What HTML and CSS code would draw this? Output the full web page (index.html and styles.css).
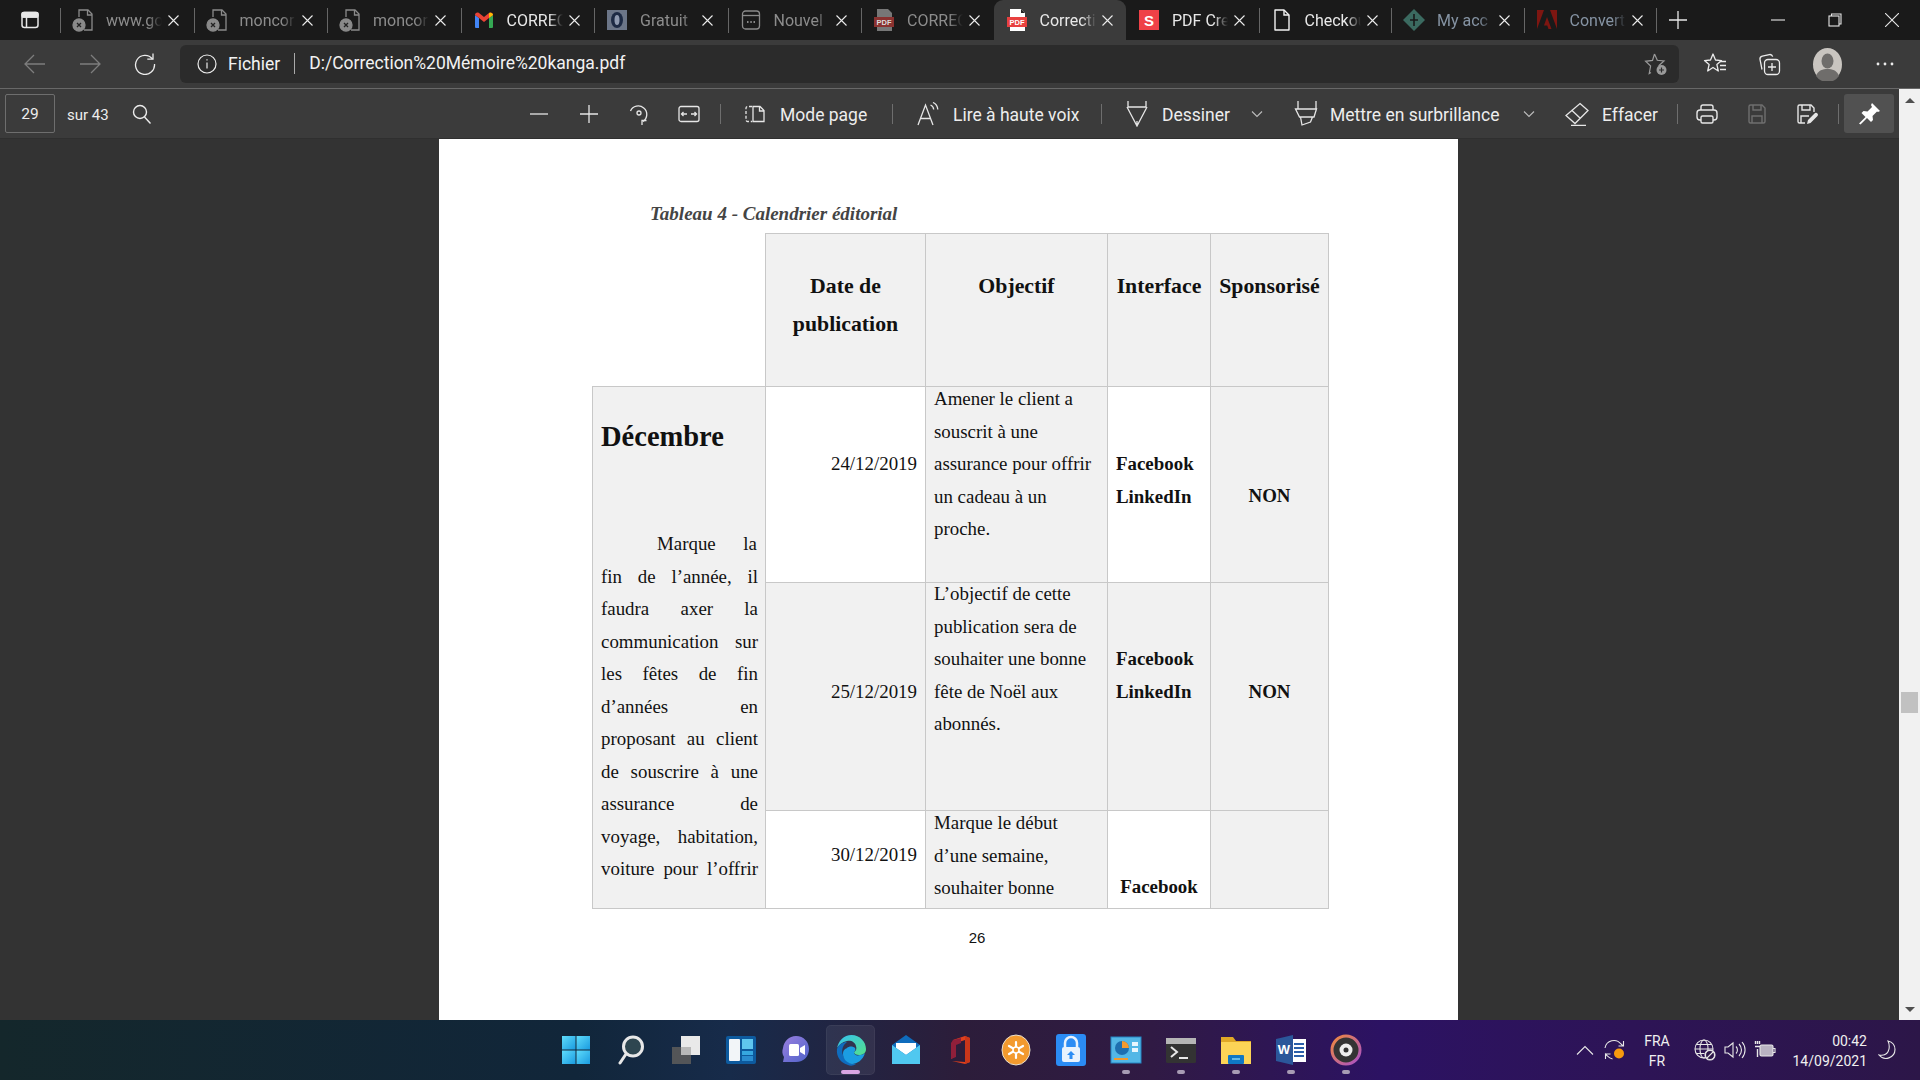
FILE: index.html
```html
<!DOCTYPE html>
<html lang="fr">
<head>
    <meta charset="UTF-8">
    <title>Correction Mémoire kanga.pdf</title>
    <link rel="stylesheet" href="styles.css">
</head>
<body>
<div class="app">

    <!-- onglets -->
    <div class="tabstrip">
        <div class="tab-menu">
            <svg width="20" height="20" viewBox="0 0 20 20" fill="none" stroke="#e8e8e8" stroke-width="1.5"><rect x="2" y="2.5" width="16" height="15" rx="2.5"/><path d="M2 7h16M6.5 7v10.5"/><rect x="2" y="2.5" width="16" height="4.5" rx="1.5" fill="#e8e8e8"/></svg>
        </div>
        <div class="tab dim">
            <svg class="fav" viewBox="0 0 22 24" fill="none" stroke="#8a8a8a" stroke-width="1.3"><path d="M7 9V2h9l4 4v16H12"/><path d="M15.5 2v5H20"/><circle cx="7" cy="17" r="6" fill="#8a8a8a"/><path d="M5 15l4 4M9 15l-4 4" stroke="#222"/></svg>
            <span class="tab-title">www.go</span><svg class="tab-x" viewBox="0 0 11 11"><path d="M.5.5l10 10M10.500.5l-10 10"/></svg>
        </div>
        <div class="tab dim">
            <svg class="fav" viewBox="0 0 22 24" fill="none" stroke="#8a8a8a" stroke-width="1.3"><path d="M7 9V2h9l4 4v16H12"/><path d="M15.5 2v5H20"/><circle cx="7" cy="17" r="6" fill="#8a8a8a"/><path d="M5 15l4 4M9 15l-4 4" stroke="#222"/></svg>
            <span class="tab-title">moncor</span><svg class="tab-x" viewBox="0 0 11 11"><path d="M.5.5l10 10M10.500.5l-10 10"/></svg>
        </div>
        <div class="tab dim">
            <svg class="fav" viewBox="0 0 22 24" fill="none" stroke="#8a8a8a" stroke-width="1.3"><path d="M7 9V2h9l4 4v16H12"/><path d="M15.5 2v5H20"/><circle cx="7" cy="17" r="6" fill="#8a8a8a"/><path d="M5 15l4 4M9 15l-4 4" stroke="#222"/></svg>
            <span class="tab-title">moncor</span><svg class="tab-x" viewBox="0 0 11 11"><path d="M.5.5l10 10M10.500.5l-10 10"/></svg>
        </div>
        <div class="tab">
            <svg class="fav" viewBox="0 0 22 20"><path d="M2 18V5l4 3v10H3a1 1 0 0 1-1-1z" fill="#4285f4"/><path d="M16 18V8l4-3v12a1 1 0 0 1-1 1z" fill="#34a853"/><path d="M2 5c0-2 2-3 4-2l5 4 5-4c2-1 4 0 4 2l-4 3-5 4-5-4z" fill="#ea4335"/><path d="M16 3.200c2-1.200 4 0 4 1.800l-4 3z" fill="#fbbc04"/></svg>
            <span class="tab-title">CORREC</span><svg class="tab-x" viewBox="0 0 11 11"><path d="M.5.5l10 10M10.500.5l-10 10"/></svg>
        </div>
        <div class="tab dim">
            <svg class="fav" viewBox="0 0 22 22"><rect x="1" y="1" width="20" height="20" fill="#6c7688"/><ellipse cx="11" cy="11" rx="6" ry="8" fill="#1d2a44"/><ellipse cx="11" cy="11" rx="2.500" ry="5" fill="#8f9ab0"/></svg>
            <span class="tab-title">Gratuit</span><svg class="tab-x" viewBox="0 0 11 11"><path d="M.5.5l10 10M10.500.5l-10 10"/></svg>
        </div>
        <div class="tab dim">
            <svg class="fav" viewBox="0 0 22 22" fill="none" stroke="#8a8a8a" stroke-width="1.3"><rect x="2.500" y="2" width="17" height="18" rx="3"/><path d="M2.500 6.500h17"/><path d="M7 13h1.500M10.300 13h1.500M13.500 13h1.500" stroke-width="1.800"/></svg>
            <span class="tab-title">Nouvel</span><svg class="tab-x" viewBox="0 0 11 11"><path d="M.5.5l10 10M10.500.5l-10 10"/></svg>
        </div>
        <div class="tab dim">
            <svg class="fav" viewBox="0 0 22 24"><path d="M4 1h11l4 4v18H4z" fill="#777"/><rect x="1" y="9" width="20" height="10" fill="#8a3230"/><text x="11" y="17" class="fav-pdf" fill="#ddd">PDF</text></svg>
            <span class="tab-title">CORREC</span><svg class="tab-x" viewBox="0 0 11 11"><path d="M.5.5l10 10M10.500.5l-10 10"/></svg>
        </div>
        <div class="tab active">
            <svg class="fav" viewBox="0 0 22 24"><path d="M4 1h11l4 4v18H4z" fill="#fff"/><path d="M15 1v4h4z" fill="#222"/><rect x="1" y="9" width="20" height="10" fill="#e8403f"/><text x="11" y="17" class="fav-pdf" fill="#fff">PDF</text></svg>
            <span class="tab-title">Correcti</span><svg class="tab-x" viewBox="0 0 11 11"><path d="M.5.5l10 10M10.500.5l-10 10"/></svg>
        </div>
        <div class="tab">
            <svg class="fav" viewBox="0 0 22 22"><rect x="1" y="1" width="20" height="20" fill="#ef4147"/><text x="11" y="16.500" class="fav-s" fill="#fff">S</text></svg>
            <span class="tab-title">PDF Cre</span><svg class="tab-x" viewBox="0 0 11 11"><path d="M.5.5l10 10M10.500.5l-10 10"/></svg>
        </div>
        <div class="tab">
            <svg class="fav" viewBox="0 0 22 24" fill="none" stroke="#f2f2f2" stroke-width="1.400"><path d="M4 2h9l5 5v15H4z" stroke-linejoin="round"/><path d="M13 2v5h5"/></svg>
            <span class="tab-title">Checkou</span><svg class="tab-x" viewBox="0 0 11 11"><path d="M.5.5l10 10M10.500.5l-10 10"/></svg>
        </div>
        <div class="tab dim">
            <svg class="fav" viewBox="0 0 22 22"><path d="M11 0l11 11-11 11L0 11z" fill="#3b6a60"/><path d="M11 5v12M7 11h8" stroke="#1a1a1a" stroke-width="1.600"/></svg>
            <span class="tab-title blueish">My acc</span><svg class="tab-x" viewBox="0 0 11 11"><path d="M.5.5l10 10M10.500.5l-10 10"/></svg>
        </div>
        <div class="tab dim">
            <svg class="fav" viewBox="0 0 22 22"><path d="M1 1h7L1 20zM14 1h7v19zM11 8l4.500 12h-3l-1.300-3.500H8z" fill="#7e1611"/></svg>
            <span class="tab-title blueish">Convert</span><svg class="tab-x" viewBox="0 0 11 11"><path d="M.5.5l10 10M10.500.5l-10 10"/></svg>
        </div>
        <div class="tab-new">
            <svg width="18" height="18" viewBox="0 0 18 18" stroke="#e8e8e8" stroke-width="1.300"><path d="M9 0v18M0 9h18"/></svg>
        </div>
        <div class="win-controls">
            <svg width="14" height="14" viewBox="0 0 14 14" stroke="#e8e8e8" stroke-width="1.100"><path d="M0 7h14"/></svg>
            <svg width="14" height="14" viewBox="0 0 14 14" fill="none" stroke="#e8e8e8" stroke-width="1.100"><rect x="1" y="3" width="10" height="10"/><path d="M3.500 3V1H13v10h-2"/></svg>
            <svg width="14" height="14" viewBox="0 0 14 14" stroke="#e8e8e8" stroke-width="1.100"><path d="M0 0l14 14M14 0L0 14"/></svg>
        </div>
    </div>

    <!-- barre d'adresse -->
    <div class="addrbar">
        <div class="nav-btn">
            <svg width="22" height="22" viewBox="0 0 22 22" fill="none" stroke="#7d7d7d" stroke-width="1.300"><path d="M21 11H1M10 2l-9 9 9 9"/></svg>
        </div>
        <div class="nav-btn">
            <svg width="22" height="22" viewBox="0 0 22 22" fill="none" stroke="#7d7d7d" stroke-width="1.300"><path d="M1 11h20M12 2l9 9-9 9"/></svg>
        </div>
        <div class="nav-btn">
            <svg width="22" height="22" viewBox="0 0 22 22" fill="none" stroke="#ececec" stroke-width="1.300"><path d="M18.500 6A9.500 9.500 0 1 0 20.500 11"/><path d="M19 0.500V6.200h-5.700"/></svg>
        </div>
        <div class="addr-box">
            <svg width="20" height="20" viewBox="0 0 20 20" fill="none" stroke="#ececec" stroke-width="1.200"><circle cx="10" cy="10" r="9"/><path d="M10 8.500v6M10 5.200v1.300"/></svg>
            <span class="addr-scheme">Fichier</span>
            <span class="addr-sep"></span>
            <span class="addr-url">D:/Correction%20Mémoire%20kanga.pdf</span>
            <svg class="addr-star" width="24" height="24" viewBox="0 0 24 24" fill="none" stroke="#9a9a9a" stroke-width="1.200"><path d="M10.500 2l2.800 6.300 6.700.7-5 4.500 1.200 3.500M7 20.500l-1.800 1 1.400-7.500-5-4.700 6.900-.9L10.500 2"/><circle cx="17.500" cy="18" r="5" fill="#9a9a9a" stroke="none"/><path d="M17.500 15.500v5M15 18h5" stroke="#2b2b2b"/></svg>
        </div>
        <div class="addr-right">
            <div class="nav-btn">
                <svg width="24" height="24" viewBox="0 0 24 24" fill="none" stroke="#ececec" stroke-width="1.300"><path d="M10 2l2.500 6 6 .6-4.600 4 1.400 6.400L10 15.500 4.700 19l1.400-6.400-4.600-4 6-.6z" stroke-linejoin="round"/><path d="M17 9.500h6M17 13.500h6M17 17.500h6"/></svg>
            </div>
            <div class="nav-btn narrow">
                <svg width="24" height="24" viewBox="0 0 24 24" fill="none" stroke="#ececec" stroke-width="1.300"><path d="M5 17.500L3 7.500a3 3 0 0 1 2.300-3.400l7-1.500a3 3 0 0 1 3.400 2"/><rect x="7.500" y="7.500" width="15" height="15" rx="3.500"/><path d="M15 11v8M11 15h8"/></svg>
            </div>
            <div class="nav-btn wide avatar">
                <svg width="29" height="33" viewBox="0 0 29 33"><ellipse cx="14.500" cy="16.500" rx="14.500" ry="16.500" fill="#c9c5c0"/><ellipse cx="14.500" cy="13" rx="6" ry="7.500" fill="#6f6d6b"/><path d="M3 28c2-6 7-7 11.500-7S24 22 26 28a14 14 0 0 1-23 0z" fill="#6f6d6b"/></svg>
            </div>
            <div class="nav-btn wide">
                <svg width="18" height="4" viewBox="0 0 18 4" fill="#ececec"><circle cx="2" cy="2" r="1.400"/><circle cx="9" cy="2" r="1.400"/><circle cx="16" cy="2" r="1.400"/></svg>
            </div>
        </div>
    </div>

    <div class="work">
        <div class="work-main">

            <!-- barre d'outils pdf -->
            <div class="pdfbar">
                <div class="page-input">29</div>
                <span class="page-total">sur 43</span>
                <svg class="ic-search" width="22" height="22" viewBox="0 0 22 22" fill="none" stroke="#ececec" stroke-width="1.400"><circle cx="9" cy="9" r="6.500"/><path d="M13.500 14l6 6.500"/></svg>

                <div class="pdf-btn first-zoom"><svg width="18" height="18" viewBox="0 0 18 18" stroke="#e6e6e6" stroke-width="1.300"><path d="M0 9h18"/></svg></div>
                <div class="pdf-btn"><svg width="18" height="18" viewBox="0 0 18 18" stroke="#e6e6e6" stroke-width="1.300"><path d="M0 9h18M9 0v18"/></svg></div>
                <div class="pdf-btn"><svg width="22" height="24" viewBox="0 0 22 24" fill="none" stroke="#e6e6e6" stroke-width="1.300"><path d="M2.500 9A8.500 8.500 0 1 1 15 19.500"/><path d="M14 23v-4.500h4.500"/><circle cx="11" cy="11" r="2"/></svg></div>
                <div class="pdf-btn"><svg width="22" height="18" viewBox="0 0 22 18" fill="none" stroke="#e6e6e6" stroke-width="1.300"><rect x="1" y="1.500" width="20" height="15" rx="2"/><path d="M3.500 9H9M5.500 7l-2 2 2 2M18.500 9H13M16.500 7l2 2-2 2"/></svg></div>
                <span class="pdf-sep sep-a"></span>

                <div class="tool t-mode">
                    <svg width="24" height="24" viewBox="0 0 24 24" fill="none" stroke="#e6e6e6" stroke-width="1.300"><path d="M9 4.500H4.500a1.500 1.500 0 0 0-1.500 1.500v12a1.500 1.500 0 0 0 1.500 1.500H9" stroke-dasharray="3 1.800"/><path d="M10 4.500h7l4 4v11H10zM16.500 4.500V9H21"/></svg>
                    <span>Mode page</span>
                </div>
                <span class="pdf-sep sep-b"></span>

                <div class="tool t-read">
                    <svg width="24" height="24" viewBox="0 0 24 24" fill="none" stroke="#e6e6e6" stroke-width="1.300"><path d="M2 23L9.500 3 17 23M4.500 16.500h10"/><path d="M14.500 3c2 .8 3 2.300 3.200 4.500M17 .5c3 1.200 4.500 3.700 4.800 7"/></svg>
                    <span>Lire à haute voix</span>
                </div>
                <span class="pdf-sep sep-c"></span>

                <div class="tool t-draw">
                    <svg width="24" height="26" viewBox="0 0 24 26" fill="none" stroke="#e6e6e6" stroke-width="1.300"><path d="M3 0v6h18V0M2 6l10 19L22 6M12 25v-5"/></svg>
                    <span>Dessiner</span>
                </div>
                <svg class="chev chev-draw" width="12" height="8" viewBox="0 0 12 8" fill="none" stroke="#bdbdbd" stroke-width="1.100"><path d="M1 1.500l5 5 5-5"/></svg>

                <div class="tool t-hl">
                    <svg width="24" height="26" viewBox="0 0 24 26" fill="none" stroke="#e6e6e6" stroke-width="1.300"><path d="M4 0v8h18V0M1.500 8h21L20 16H5.500zM6.500 16l1.500 8 8.500-3 2-5"/></svg>
                    <span>Mettre en surbrillance</span>
                </div>
                <svg class="chev chev-hl" width="12" height="8" viewBox="0 0 12 8" fill="none" stroke="#bdbdbd" stroke-width="1.100"><path d="M1 1.500l5 5 5-5"/></svg>

                <div class="tool t-erase">
                    <svg width="24" height="24" viewBox="0 0 24 24" fill="none" stroke="#e6e6e6" stroke-width="1.300"><path d="M15 1.500l8 7-13 13-9-8zM6.500 8l9 8.500M6 23.500h15"/></svg>
                    <span>Effacer</span>
                </div>
                <span class="pdf-sep sep-d"></span>

                <div class="pdf-btn first-print"><svg width="22" height="22" viewBox="0 0 22 22" fill="none" stroke="#e6e6e6" stroke-width="1.400"><path d="M5 7V4a2 2 0 0 1 2-2h8a2 2 0 0 1 2 2v3"/><rect x="1" y="7" width="20" height="10" rx="3"/><rect x="5" y="13" width="12" height="7" rx="1.500" fill="#3b3b3b"/></svg></div>
                <div class="pdf-btn"><svg width="20" height="22" viewBox="0 0 20 22" fill="none" stroke="#6f6f6f" stroke-width="1.400"><path d="M2 3.500A1.500 1.500 0 0 1 3.500 2H15l3 3v13.500a1.500 1.500 0 0 1-1.500 1.500h-13A1.500 1.500 0 0 1 2 18.500z"/><path d="M6 2v5h8V2M5 20v-7h10v7"/></svg></div>
                <div class="pdf-btn"><svg width="22" height="22" viewBox="0 0 22 22" fill="none" stroke="#e6e6e6" stroke-width="1.400"><path d="M9 20H3.500A1.500 1.500 0 0 1 2 18.500v-15A1.500 1.500 0 0 1 3.500 2H15l3 3v4"/><path d="M6 2v5h8V2M5 20v-7h8"/><path d="M11 21l1-4 7-7a2 2 0 0 1 2.500 3l-7 7z" fill="#e6e6e6" stroke="none"/></svg></div>
                <span class="pdf-sep sep-e"></span>
                <div class="pin-btn"><svg width="22" height="22" viewBox="0 0 22 22" fill="#fff"><path d="M14 0l8 8-2 1-1-.500-4.500 4.500.5 4-2 2-4-4-6.500 6.500L1 20.500 7.500 14l-4-4 2-2 4 .5L14 4l-1-2z"/></svg></div>
            </div>

            <!-- page -->
            <div class="viewer">
                <div class="page">
                    <p class="caption">Tableau 4 - Calendrier éditorial</p>
                    <table class="cal">
                        <colgroup>
                            <col class="c-month"><col class="c-date"><col class="c-obj"><col class="c-iface"><col class="c-spons">
                        </colgroup>
                        <tr class="r-head">
                            <td class="blank"></td>
                            <th>Date de<br>publication</th>
                            <th>Objectif</th>
                            <th>Interface</th>
                            <th>Sponsorisé</th>
                        </tr>
                        <tr class="r-1">
                            <td class="month" rowspan="3">
                                <div class="month-name">Décembre</div>
                                <div class="month-text">
                                    <span class="indent">Marque la</span><br>
                                    fin de l’année, il<br>
                                    faudra axer la<br>
                                    communication sur<br>
                                    les fêtes de fin<br>
                                    d’années en<br>
                                    proposant au client<br>
                                    de souscrire à une<br>
                                    assurance de<br>
                                    voyage, habitation,<br>
                                    voiture pour l’offrir
                                </div>
                            </td>
                            <td class="date white"><div class="line3">24/12/2019</div></td>
                            <td class="grey"><div class="line1">Amener le client a<br>souscrit à une<br>assurance pour offrir<br>un cadeau à un<br>proche.</div></td>
                            <td class="net white"><div class="line3">Facebook<br>LinkedIn</div></td>
                            <td class="spons grey"><div class="line4">NON</div></td>
                        </tr>
                        <tr class="r-2">
                            <td class="date grey"><div class="line4">25/12/2019</div></td>
                            <td class="grey"><div class="line1">L’objectif de cette<br>publication sera de<br>souhaiter une bonne<br>fête de Noël aux<br>abonnés.</div></td>
                            <td class="net grey"><div class="line3">Facebook<br>LinkedIn</div></td>
                            <td class="spons grey"><div class="line4">NON</div></td>
                        </tr>
                        <tr class="r-3">
                            <td class="date white"><div class="line2">30/12/2019</div></td>
                            <td class="grey"><div class="line1">Marque le début<br>d’une semaine,<br>souhaiter bonne</div></td>
                            <td class="net net-mid white"><div class="line3">Facebook</div></td>
                            <td class="grey"></td>
                        </tr>
                    </table>
                    <div class="page-num">26</div>
                </div>
            </div>
        </div>

        <div class="scrollbar">
            <span class="arrow-up"></span>
            <span class="thumb"></span>
            <span class="arrow-down"></span>
        </div>
    </div>

    <!-- barre des taches -->
    <div class="taskbar">
        <div></div>
        <div class="task-icons">
            <div class="task-item">
                <svg viewBox="0 0 32 32"><defs><linearGradient id="w1" x1="0" y1="0" x2="1" y2="1"><stop offset="0" stop-color="#5fdcfb"/><stop offset="1" stop-color="#1a9be0"/></linearGradient></defs><rect x="2" y="2" width="13.500" height="13.500" fill="url(#w1)"/><rect x="16.500" y="2" width="13.500" height="13.500" fill="url(#w1)"/><rect x="2" y="16.500" width="13.500" height="13.500" fill="url(#w1)"/><rect x="16.500" y="16.500" width="13.500" height="13.500" fill="url(#w1)"/></svg>
                <i class="dot none"></i>
            </div>
            <div class="task-item">
                <svg viewBox="0 0 32 32" fill="none"><circle cx="18" cy="12.500" r="9.500" stroke="#e8e8e8" stroke-width="3" fill="#2e4650"/><path d="M11 20l-6 9" stroke="#e8e8e8" stroke-width="3" stroke-linecap="round"/></svg>
                <i class="dot none"></i>
            </div>
            <div class="task-item">
                <svg viewBox="0 0 32 32"><rect x="11" y="2" width="19" height="19" fill="#e9e9e9"/><rect x="2" y="13" width="19" height="17" fill="#5a5a5a" opacity=".9"/><rect x="11" y="13" width="10" height="8" fill="#b8b8b8"/></svg>
                <i class="dot none"></i>
            </div>
            <div class="task-item">
                <svg viewBox="0 0 32 32"><rect x="1" y="2" width="30" height="28" rx="2" fill="#0d5a9e"/><rect x="4" y="5" width="11" height="22" rx="1" fill="#f2f5f8"/><rect x="17" y="5" width="11" height="10" fill="#5fc6ee"/><rect x="17" y="17" width="11" height="4" fill="#36a7e0"/><rect x="17" y="22" width="11" height="5" fill="#2a8cd0"/></svg>
                <i class="dot none"></i>
            </div>
            <div class="task-item">
                <svg viewBox="0 0 32 32"><defs><linearGradient id="c1" x1="0" y1="0" x2="1" y2="1"><stop offset="0" stop-color="#9a7fe0"/><stop offset="1" stop-color="#4f63c9"/></linearGradient></defs><path d="M16 2c8 0 13 6 13 13s-5 13-13 13H3l1-5C2 20 2 17 3 14 4 7 9 2 16 2z" fill="url(#c1)"/><rect x="9" y="10" width="10" height="12" rx="1.500" fill="#fff"/><path d="M20 14l5-3v10l-5-3z" fill="#fff"/></svg>
                <i class="dot none"></i>
            </div>
            <div class="task-item active">
                <svg viewBox="0 0 32 32"><defs><linearGradient id="e1" x1="0" y1="0" x2="1" y2="1"><stop offset="0" stop-color="#35c1f1"/><stop offset="1" stop-color="#54e08a"/></linearGradient></defs><path d="M2 15C3 7 9 1 16.500 1 25 1 31 8 31 15c0 4-3 6-7 6-3 0-5-1-5-3 2-1 3-3 2-6-1-4-5-6-9-5-5 1-8 4-10 7z" fill="url(#e1)"/><path d="M2 15c2-5 6-7 10-7-4 3-6 8-4 13 1 5 6 9 11 9l2 .3C18 32 15 32 13 31 6 29 1 23 2 15z" fill="#0f6cbd"/><path d="M12 14c2-2 6-2 8 0 1 2 0 3-1 4 0 3 3 4 6 3 2 0 4-1 5-2-2 7-8 11-13 11-6-1-9-6-9-10s2-5 4-6z" fill="#1b9de2"/></svg>
                <i class="dot pill"></i>
            </div>
            <div class="task-item">
                <svg viewBox="0 0 32 32"><path d="M16 1l14 10v19H2V11z" fill="#0f6cbd"/><path d="M6 9h20v5l-10 7-10-7z" fill="#fff"/><path d="M2 11l14 10 14-10v19H2z" fill="#50c8f0"/></svg>
                <i class="dot none"></i>
            </div>
            <div class="task-item">
                <svg viewBox="0 0 32 32"><path d="M8 6l12-4 5 2v24l-5 2-13-3 13 1V6l-9 3v13l-5 3z" fill="#e1401c"/><path d="M8 6l8-2v5l-5 2v12l-5 2V9z" fill="#8f1f3a"/><path d="M20 2l5 2v24l-5 2z" fill="#c8361a"/></svg>
                <i class="dot none"></i>
            </div>
            <div class="task-item">
                <svg viewBox="0 0 32 32"><ellipse cx="16" cy="16" rx="14" ry="15" fill="#f39a2e" stroke="#e8e0d0"/><g stroke="#fff" stroke-width="2.200" stroke-linecap="round"><path d="M16 8v16M9 12l14 8M23 12L9 20"/></g><circle cx="16" cy="16" r="3" fill="#f39a2e" stroke="#fff" stroke-width="1.500"/></svg>
                <i class="dot none"></i>
            </div>
            <div class="task-item">
                <svg viewBox="0 0 32 32"><rect x="1" y="0" width="30" height="32" rx="3" fill="#2b8cf4"/><rect x="7" y="13" width="18" height="15" rx="2" fill="#e8f2fd"/><path d="M10 13V9a6 6 0 0 1 12 0v4" fill="none" stroke="#e8f2fd" stroke-width="2.500"/><path d="M16 17l-4 4h2.500v4h3v-4H20z" fill="#2b8cf4"/></svg>
                <i class="dot none"></i>
            </div>
            <div class="task-item">
                <svg viewBox="0 0 32 32"><rect x="1" y="3" width="30" height="26" fill="#53b7e6" stroke="#2486c4"/><circle cx="12" cy="14" r="7" fill="#1e6fb0"/><path d="M12 14V7a7 7 0 0 1 7 7z" fill="#f39a2e"/><rect x="22" y="8" width="6" height="4" fill="#e8f6fd"/><rect x="22" y="14" width="6" height="4" fill="#e8f6fd"/><rect x="4" y="24" width="14" height="2" fill="#f39a2e"/></svg>
                <i class="dot"></i>
            </div>
            <div class="task-item">
                <svg viewBox="0 0 32 32"><rect x="1" y="4" width="30" height="25" rx="1.500" fill="#333"/><rect x="1" y="4" width="30" height="6" fill="#b5b5b5"/><path d="M6 13l6 5-6 5" fill="none" stroke="#e8e8e8" stroke-width="2"/><path d="M14 24h9" stroke="#e8e8e8" stroke-width="2"/></svg>
                <i class="dot"></i>
            </div>
            <div class="task-item">
                <svg viewBox="0 0 32 32"><path d="M1 3h12l3 4h15v23H1z" fill="#e0a826"/><rect x="1" y="8" width="30" height="22" fill="#fcd456"/><rect x="8" y="21" width="16" height="9" rx="1" fill="#0f78c4"/><path d="M12 25h8" stroke="#7fd0f5" stroke-width="1.500"/></svg>
                <i class="dot"></i>
            </div>
            <div class="task-item">
                <svg viewBox="0 0 32 32"><rect x="12" y="5" width="19" height="23" fill="#fff"/><path d="M19 10h10M19 14h10M19 18h10M19 22h10" stroke="#2b5faa" stroke-width="2"/><path d="M1 5l17-4v30L1 27z" fill="#2b579a"/><text x="9" y="20" class="word-w" fill="#fff">W</text></svg>
                <i class="dot"></i>
            </div>
            <div class="task-item">
                <svg viewBox="0 0 32 32"><defs><linearGradient id="g1" x1="0" y1="0" x2="1" y2="1"><stop offset="0" stop-color="#f08a3c"/><stop offset="1" stop-color="#a850c8"/></linearGradient></defs><circle cx="16" cy="16" r="14" fill="#343434" stroke="url(#g1)" stroke-width="3"/><circle cx="16" cy="16" r="6.500" fill="#eee"/><circle cx="16" cy="16" r="2.500" fill="#333"/></svg>
                <i class="dot"></i>
            </div>
        </div>
        <div class="tray">
            <div class="tray-ic">
                <svg width="18" height="10" viewBox="0 0 18 10" fill="none" stroke="#e8e8e8" stroke-width="1.100"><path d="M1 9.500l8-8 8 8"/></svg>
            </div>
            <div class="tray-ic">
                <svg width="22" height="22" viewBox="0 0 22 22" fill="none" stroke="#e8e8e8" stroke-width="1.100"><path d="M1 9a9 9 0 0 1 16-4l2 2M19.500 2v5h-5"/><path d="M1.500 15h5M1.500 20v-5l2 2a9 9 0 0 0 5 3"/><circle cx="15" cy="14.500" r="5" fill="#f79a0e" stroke="none"/></svg>
            </div>
            <div class="tray-lang">FRA<br>FR</div>
            <div class="tray-ic globe">
                <svg width="22" height="22" viewBox="0 0 22 22" fill="none" stroke="#e8e8e8" stroke-width="1.100"><circle cx="10" cy="10" r="9"/><ellipse cx="10" cy="10" rx="4" ry="9"/><path d="M1 10h18M2.500 5.500h15M2.500 14.500h8"/><circle cx="16" cy="16" r="5" fill="#2c1648"/><path d="M13 19l6-6"/><circle cx="16" cy="16" r="4.500"/></svg>
            </div>
            <div class="tray-ic">
                <svg width="22" height="20" viewBox="0 0 22 20" fill="none" stroke="#e8e8e8" stroke-width="1.100"><path d="M1 7v6h3l5 4V3L4 7z"/><path d="M12 6.500a5 5 0 0 1 0 7M15 4a8.500 8.500 0 0 1 0 12M18 2a12 12 0 0 1 0 16"/></svg>
            </div>
            <div class="tray-ic">
                <svg width="22" height="18" viewBox="0 0 22 18" fill="none" stroke="#e8e8e8" stroke-width="1.100"><rect x="6" y="4" width="13" height="11" rx="1.500" fill="#e8e8e8" fill-opacity=".75"/><path d="M19 7.500h2v4h-2"/><path d="M1 5.500h5M3.500 0v3M1.500 0v3M5.500 0v3M3.500 8v8" stroke-width="1.400"/></svg>
            </div>
            <div class="tray-clock">00:42<br>14/09/2021</div>
            <div class="tray-ic moon">
                <svg width="18" height="20" viewBox="0 0 18 20" fill="none" stroke="#e8e8e8" stroke-width="1.100"><path d="M10 1c4 1 7 4 7 8.500A9 9 0 0 1 1 15c5 1 9-1 10-6 .5-3 0-6-1-8z"/></svg>
            </div>
        </div>
    </div>

</div>
</body>
</html>
```

FILE: styles.css
```css
html, body {
    margin: 0;
    padding: 0;
}

body {
    font-family: Roboto, "Noto Sans", sans-serif;
    background: #333;
}

.app {
    width: 1920px;
    height: 1080px;
    display: flex;
    flex-direction: column;
    overflow: hidden;
}

/* onglets */
.tabstrip {
    height: 40px;
    background: #1a1a1a;
    display: flex;
    align-items: center;
    flex-shrink: 0;
}

.tab-menu {
    width: 60px;
    display: flex;
    justify-content: center;
}

.tab {
    width: 132.500px;
    height: 40px;
    box-sizing: border-box;
    display: flex;
    align-items: center;
    position: relative;
    padding-left: 12px;
    color: #e8e8e8;
}

.tab:nth-child(-n+7) {
    width: 133.500px;
}

.tab::before {
    content: "";
    position: absolute;
    left: 0;
    top: 8px;
    height: 25px;
    width: 1px;
    background: #666;
}

.tab.active {
    background: #3b3b3b;
    border-radius: 9px 9px 0 0;
}

.tab.active::before,
.tab.active + .tab::before {
    display: none;
}

.fav {
    width: 22px;
    height: 24px;
    flex-shrink: 0;
}

.fav-pdf {
    font-family: "Liberation Sans", sans-serif;
    font-size: 7.500px;
    font-weight: bold;
    text-anchor: middle;
}

.fav-s {
    font-family: "Liberation Sans", sans-serif;
    font-size: 15px;
    font-weight: bold;
    text-anchor: middle;
}

.tab-title {
    margin-left: 12px;
    width: 56px;
    white-space: nowrap;
    overflow: hidden;
    font-size: 16px;
    -webkit-mask-image: linear-gradient(to right, #000 75%, transparent 100%);
    mask-image: linear-gradient(to right, #000 75%, transparent 100%);
}

.tab-x {
    margin-left: 6px;
    width: 11px;
    height: 11px;
    stroke: #ececec;
    stroke-width: 1.100;
    fill: none;
    flex-shrink: 0;
}

.tab.dim .tab-title {
    color: #8c8c8c;
}

.tab.dim .tab-title.blueish {
    color: #8593a3;
}

.tab-new {
    width: 42px;
    display: flex;
    justify-content: center;
    height: 25px;
    align-items: center;
    border-left: 1px solid #666;
}

.win-controls {
    margin-left: 72px;
    display: flex;
    gap: 43px;
}

/* barre d'adresse */
.addrbar {
    height: 49px;
    box-sizing: border-box;
    background: #3b3b3b;
    border-bottom: 1px solid #686868;
    display: flex;
    align-items: flex-start;
    flex-shrink: 0;
    padding-left: 7px;
    padding-top: 5px;
}

.nav-btn {
    width: 55px;
    height: 38px;
    display: flex;
    align-items: center;
    justify-content: center;
}

.nav-btn.narrow {
    width: 54px;
}

.nav-btn.wide {
    width: 57px;
}

.nav-btn.avatar {
    margin-left: 3px;
}

.addr-box {
    margin-left: 8px;
    width: 1499px;
    height: 38px;
    box-sizing: border-box;
    background: #2b2b2b;
    border-radius: 6px;
    display: flex;
    align-items: center;
    padding-left: 17px;
    padding-right: 11px;
    padding-bottom: 1px;
    color: #f2f2f2;
    font-size: 17.500px;
}

.addr-scheme {
    margin-left: 11px;
}

.addr-sep {
    width: 1px;
    height: 21px;
    background: #aaa;
    margin-left: 14px;
}

.addr-url {
    margin-left: 14px;
    padding-bottom: 1px;
}

.addr-star {
    margin-left: auto;
}

.addr-right {
    display: flex;
    padding-left: 8px;
}

/* barre d'outils pdf */
.work {
    flex: 1;
    display: flex;
    min-height: 0;
}

.work-main {
    flex: 1;
    min-width: 0;
    display: flex;
    flex-direction: column;
}

.pdfbar {
    height: 50px;
    box-sizing: border-box;
    background: #3b3b3b;
    border-bottom: 1px solid #2f2f2f;
    display: flex;
    align-items: center;
    color: #ededed;
    flex-shrink: 0;
}

.page-input {
    margin-left: 5px;
    width: 50px;
    height: 39px;
    box-sizing: border-box;
    border: 1px solid #6e6e6e;
    border-radius: 2px;
    display: flex;
    align-items: center;
    justify-content: center;
    padding-top: 1px;
    font-size: 15.500px;
}

.page-total {
    margin-left: 12px;
    padding-top: 2px;
    width: 41px;
    font-size: 15px;
    white-space: nowrap;
}

.ic-search {
    margin-left: 23px;
}

.pdf-btn {
    width: 50px;
    height: 39px;
    display: flex;
    align-items: center;
    justify-content: center;
    flex-shrink: 0;
}

.first-zoom {
    margin-left: 361px;
}

.first-print {
    margin-left: 4px;
}

.pdf-sep {
    width: 1px;
    height: 20px;
    background: #6e6e6e;
    flex-shrink: 0;
}

.sep-a { margin-left: 6px; }
.sep-b { margin-left: 23px; }
.sep-c { margin-left: 22px; }
.sep-d { margin-left: 23px; }
.sep-e { margin-left: 6px; }

.tool {
    display: flex;
    align-items: center;
    gap: 13px;
    font-size: 17.500px;
    white-space: nowrap;
    flex-shrink: 0;
}

.tool svg {
    flex-shrink: 0;
}

.tool span {
    padding-top: 2px;
}

.t-mode { margin-left: 22px; width: 126px; }
.t-read { margin-left: 23px; width: 163px; }
.t-draw { margin-left: 23px; width: 103px; }
.t-hl { margin-left: 31px; width: 206px; gap: 12px; }
.t-erase { margin-left: 30px; width: 89px; }

.chev { flex-shrink: 0; }
.chev-draw { margin-left: 23px; }
.chev-hl { margin-left: 23px; }

.pin-btn {
    margin-left: 5px;
    width: 50px;
    height: 39px;
    background: #515151;
    border-radius: 3px;
    display: flex;
    align-items: center;
    justify-content: center;
    flex-shrink: 0;
}

/* page */
.viewer {
    flex: 1;
    min-height: 0;
    background: #333;
    padding-left: 439px;
    overflow: hidden;
}

.page {
    width: 1019px;
    height: 881px;
    background: #fff;
    overflow: hidden;
    font-family: "Liberation Serif", "Times New Roman", serif;
    color: #111;
}

.caption {
    margin: 0;
    padding: 62px 0 0 211px;
    height: 32px;
    line-height: 26px;
    font-size: 19px;
    font-style: italic;
    font-weight: bold;
    color: #444;
}

.cal {
    margin-left: 153px;
    border-collapse: collapse;
    table-layout: fixed;
    width: 736px;
    font-size: 18.900px;
    line-height: 32.500px;
}

.c-month { width: 173px; }
.c-date { width: 160px; }
.c-obj { width: 182px; }
.c-iface { width: 103px; }
.c-spons { width: 118px; }

.cal td, .cal th {
    border: 1px solid #c8c8c8;
    padding: 0 8px;
    vertical-align: top;
}

.cal td.blank {
    border: 0;
    border-bottom: 1px solid #c8c8c8;
    background: #fff;
}

.cal th {
    background: #f1f1f1;
    font-size: 21.800px;
    line-height: 38px;
    padding: 33px 0 0;
    text-align: center;
}

.r-head { height: 153px; }
.r-1 { height: 196px; }
.r-2 { height: 228px; }
.r-3 { height: 98px; }

.grey { background: #f1f1f1; }
.white { background: #fff; }

.cal td.month {
    background: #f1f1f1;
    padding: 0 7px 0 8px;
}

.month-name {
    font-size: 28.500px;
    font-weight: bold;
    line-height: 34px;
    margin-top: 33px;
}

.month-text {
    margin-top: 74px;
    text-align: justify;
    text-align-last: justify;
}

.indent {
    display: inline-block;
    width: 100px;
    margin-left: 56px;
    text-align: justify;
    text-align-last: justify;
}

.date { text-align: right; }

.net { font-weight: bold; }
.net-mid { text-align: center; }

.spons {
    font-weight: bold;
    text-align: center;
}

.line1 { margin-top: -4px; }
.line2 { margin-top: 28px; }
.line3 { margin-top: 61px; }
.line4 { margin-top: 92.500px; }

.r-2 .line1 { margin-top: -5px; }
.r-2 .line3 { margin-top: 60px; }
.r-3 .line3 { margin-top: 60px; }

.page-num {
    margin-top: 19px;
    padding-left: 57px;
    text-align: center;
    font-family: "Liberation Sans", sans-serif;
    font-size: 15px;
    line-height: 20px;
    color: #111;
}

/* ascenseur */
.scrollbar {
    width: 21px;
    background: #f1f1f1;
    display: flex;
    flex-direction: column;
    align-items: center;
    flex-shrink: 0;
}

.arrow-up {
    margin-top: 9px;
    width: 0;
    height: 0;
    border-left: 5px solid transparent;
    border-right: 5px solid transparent;
    border-bottom: 5px solid #505050;
}

.thumb {
    margin-top: 589px;
    width: 17px;
    height: 21px;
    background: #c1c1c1;
}

.arrow-down {
    margin-top: auto;
    margin-bottom: 8px;
    width: 0;
    height: 0;
    border-left: 5px solid transparent;
    border-right: 5px solid transparent;
    border-top: 5px solid #505050;
}

/* barre des taches */
.taskbar {
    height: 60px;
    flex-shrink: 0;
    display: grid;
    grid-template-columns: 1fr auto 1fr;
    align-items: center;
    background: linear-gradient(to right, #14272b 0%, #11263a 30%, #172b4a 38%, #2c1d3a 50%, #301a44 60%, #2c1263 72%, #2d1456 85%, #2c1648 100%);
}

.task-icons {
    display: flex;
    margin-left: 1px;
}

.task-item {
    width: 55px;
    height: 50px;
    box-sizing: border-box;
    padding-top: 9px;
    display: flex;
    flex-direction: column;
    align-items: center;
    border-radius: 5px;
}

.task-item svg {
    width: 32px;
    height: 32px;
}

.task-item.active {
    width: 49px;
    margin: 0 3px;
    background: rgba(255, 255, 255, 0.07);
    box-shadow: inset 0 0 0 1px rgba(255, 255, 255, 0.05);
}

.dot {
    margin-top: 4px;
    width: 8px;
    height: 4px;
    border-radius: 2px;
    background: #a89cb4;
}

.dot.none {
    visibility: hidden;
}

.dot.pill {
    width: 19px;
    background: #d9a6e3;
}

.tray {
    display: flex;
    align-items: center;
    justify-content: flex-end;
    padding-right: 18px;
    color: #f0f0f0;
    font-size: 14px;
    font-family: Roboto, sans-serif;
}

.tray-ic {
    width: 30px;
    display: flex;
    justify-content: center;
    align-items: center;
}

.tray-lang {
    width: 42px;
    margin-left: 6px;
    padding-top: 2px;
    text-align: center;
    line-height: 20px;
}

.globe {
    margin-left: 12px;
}

.tray-clock {
    width: 87px;
    padding-top: 2px;
    text-align: right;
    line-height: 20px;
}

.moon {
    margin-left: 5px;
}

.word-w {
    font-family: "Liberation Sans", sans-serif;
    font-size: 13px;
    font-weight: bold;
    text-anchor: middle;
}
```
